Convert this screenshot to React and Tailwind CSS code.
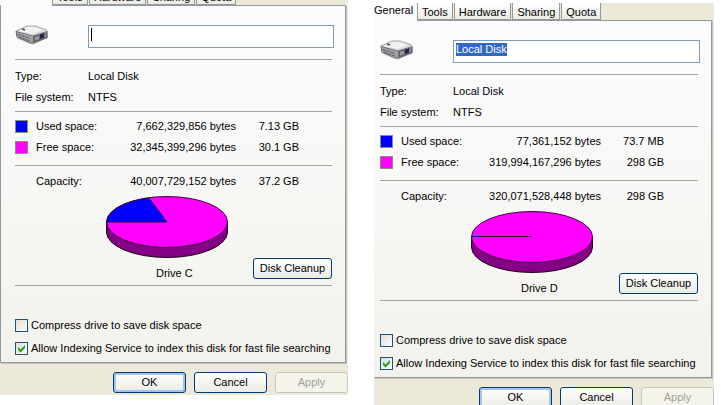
import { useEffect, useRef } from "react";

const drives = [
  {
    id: "c",
    name: "Drive C",
    label: "",
    used: ["7,662,329,856 bytes", "7.13 GB"],
    free: ["32,345,399,296 bytes", "30.1 GB"],
    capacity: ["40,007,729,152 bytes", "37.2 GB"],
    // edge of the used slice on the top face of the pie
    slice: "M61 26 L1 26 A60 25 0 0 1 43 2 Z",
  },
  {
    id: "d",
    name: "Drive D",
    label: "Local Disk",
    used: ["77,361,152 bytes", "73.7 MB"],
    free: ["319,994,167,296 bytes", "298 GB"],
    capacity: ["320,071,528,448 bytes", "298 GB"],
    slice: "M61 25.5 L1 25.5",
  },
];

function DiskIcon() {
  return (
    <svg width="34" height="20" viewBox="0 0 34 20" aria-hidden="true">
      <path d="M2 12 L17 18.5 L33 12 L33 13 L18 20 L2 14 Z" fill="#d9d9dc" />
      <path d="M1 6 L18 10 L18 18 L15 18 L2 12 Z" fill="#a3a3a6" />
      <path d="M18 10 L32 6 L32.5 13 L18 18 Z" fill="#66666f" />
      <path d="M1 6 L12 1 L20 1 L32 5 L32 7 L18 11 Z" fill="#dededf" />
      <path d="M4 6 L13 2 L20 2 L28 5 L17 9 Z" fill="#f2f2f3" />
      <path d="M1 6 L12 1 L20 1 L32 5" fill="none" stroke="#a9a9ac" />
      <path d="M1 6.5 L18 11 L32 6.5" fill="none" stroke="#77777b" />
      <path d="M7 4 L10 5" stroke="#4c4c50" strokeWidth="1.5" />
      <path d="M3 9.5 L15 13.5 M4 12 L15 16" stroke="#56565a" strokeDasharray="3 1" />
      <path d="M1 6 L2 12 L15 18 L19 18 L32 12.5 L32 6" fill="none" stroke="#66666b" />
      <path d="M20 12 L24 11 L24 14 L20 15.5 Z" fill="#9a9aa2" />
      <path d="M25 9.5 L30 8 L30 12 L25 14 Z" fill="#23234f" />
      <path d="M29 8.5 L31 8 L31 11.5 L29 12.5 Z" fill="#8585a8" />
    </svg>
  );
}

function PieChart({ slice }) {
  return (
    <svg width="122" height="62" viewBox="0 0 122 62" aria-hidden="true">
      <path
        d="M0.5 26 V36 A60.5 25.5 0 0 0 121.5 36 V26 Z"
        fill="#840084"
        stroke="#1c001c"
      />
      <ellipse cx="61" cy="26" rx="60.5" ry="25.5" fill="#ff00ff" stroke="#3a003a" />
      <path d={slice} fill="#0000ff" stroke="#2a0048" />
    </svg>
  );
}

function Divider() {
  return <hr className="border-0 border-t border-[#a5a59d]" />;
}

function Tab({ children }) {
  return (
    <button
      type="button"
      role="tab"
      aria-selected="false"
      className="mr-px h-[17px] border-x border-b border-[#919b9c] bg-linear-to-b from-white to-[#ecebe5] px-1 pt-[2px] leading-[14px]"
    >
      {children}
    </button>
  );
}

function Check({ id, checked, children }) {
  return (
    <div className="flex h-[23px] items-center gap-[3px]">
      <span className="relative flex">
        <input
          id={id}
          type="checkbox"
          defaultChecked={checked}
          className="peer size-[13px] appearance-none border border-[#1d5180] bg-linear-to-br from-[#dcdcd7] to-white"
        />
        <svg
          viewBox="0 0 13 13"
          className="pointer-events-none absolute inset-0 hidden size-[13px] peer-checked:block"
          aria-hidden="true"
        >
          <path d="M3 5 L5.5 7.5 L10 3 V6 L5.5 10.5 L3 8 Z" fill="#21a121" />
        </svg>
      </span>
      <label htmlFor={id}>{children}</label>
    </div>
  );
}

function SpaceRow({ color, title, values }) {
  return (
    <tr className="h-[21px]">
      <td className="w-[21px] p-0">
        {color && <div className={`size-[13px] border border-[#8c8c84] ${color}`} />}
      </td>
      <th scope="row" className="w-[75px] p-0 text-left font-normal">
        {title}
      </th>
      <td className="w-[125px] p-0 text-right">{values[0]}</td>
      <td className="w-[63px] p-0 text-right">{values[1]}</td>
    </tr>
  );
}

function DriveProperties({ drive, clipped }) {
  const labelRef = useRef(null);

  useEffect(() => {
    // the volume label starts out selected
    if (drive.label) {
      labelRef.current.focus();
      labelRef.current.select();
    }
  }, [drive.label]);

  return (
    <section
      aria-label={drive.name}
      className={`self-start bg-[#ece9d8] ${clipped ? "mt-[3px]" : "-mt-3"}`}
    >
      <div role="tablist" className="flex h-[17px]">
        <button
          type="button"
          role="tab"
          aria-selected="true"
          aria-label="General"
          className={`h-[17px] bg-[#fcfcfe] pb-[3px] leading-[14px] ${
            clipped ? "w-[43px] text-left" : "w-[52px]"
          }`}
        >
          {clipped && "General"}
        </button>
        <Tab>Tools</Tab>
        <Tab>Hardware</Tab>
        <Tab>Sharing</Tab>
        <Tab>Quota</Tab>
      </div>

      <div
        className={`mr-[2px] border-r border-b border-[#919b9c] bg-linear-to-b from-[#fcfcfe] to-[#f3f2ec] pr-[13px] shadow-[1px_1px_0_#c6c4b8] ${
          clipped ? "pl-[6px]" : "border-l pl-[14px]"
        }`}
      >
        <div className="-mr-[13px] ml-[37px] border-t border-[#919b9c]" />
        <div className="-mr-[2px] flex items-start pt-[19px] pb-[11px]">
          <div className="w-[73px]">
            <DiskIcon />
          </div>
          <div className="relative flex grow">
            <input
              ref={labelRef}
              aria-label="Volume label"
              defaultValue={drive.label}
              className="w-0 grow border border-[#7f9db9] bg-white px-[2px] pt-[2px] pb-[6px] leading-[13px] outline-none selection:bg-[#316ac5] selection:text-white"
            />
            {!drive.label && (
              <span className="absolute top-[3px] left-[3px] h-[13px] w-px bg-black" />
            )}
          </div>
        </div>
        <Divider />

        <dl className="grid grid-cols-[73px_1fr] pt-[6px] pb-[3px] leading-[21px]">
          <dt>Type:</dt>
          <dd>Local Disk</dd>
          <dt>File system:</dt>
          <dd>NTFS</dd>
        </dl>
        <Divider />

        <table className="mt-[4px] mb-[7px] table-fixed border-collapse">
          <tbody>
            <SpaceRow color="bg-[#0000ff]" title="Used space:" values={drive.used} />
            <SpaceRow color="bg-[#ff00ff]" title="Free space:" values={drive.free} />
          </tbody>
        </table>
        <Divider />
        <table className="mt-[5px] table-fixed border-collapse">
          <tbody>
            <SpaceRow title="Capacity:" values={drive.capacity} />
          </tbody>
        </table>

        <div className="flex items-end justify-between pt-[4px] pb-[6px]">
          <figure className="pl-[91px]">
            <PieChart slice={drive.slice} />
            <figcaption className="pt-[9px] pl-[50px] leading-[12px]">{drive.name}</figcaption>
          </figure>
          <button
            type="button"
            className="h-[21px] w-[79px] rounded-[3px] border border-[#003c74] bg-linear-to-b from-white to-[#ecebe5] leading-[13px]"
          >
            Disk Cleanup
          </button>
        </div>
        <Divider />

        <div className="pt-[28px] pb-[2px]">
          <Check id={`compress-${drive.id}`}>Compress drive to save disk space</Check>
          <Check id={`index-${drive.id}`} checked>
            Allow Indexing Service to index this disk for fast file searching
          </Check>
        </div>
      </div>

      <div className="flex justify-end gap-2 pt-[9px] pb-[2px]">
        <button
          type="button"
          className="h-[21px] w-[73px] rounded-[3px] border border-[#003c74] bg-linear-to-b from-white to-[#ecebe5] inset-ring-2 inset-ring-[#a6c3ee]"
        >
          OK
        </button>
        <button
          type="button"
          className="h-[21px] w-[73px] rounded-[3px] border border-[#003c74] bg-linear-to-b from-white to-[#ecebe5]"
        >
          Cancel
        </button>
        <button
          type="button"
          disabled
          className="h-[21px] w-[73px] rounded-[3px] border border-[#c9c7ba] bg-[#f5f4ea] text-[#a1a192]"
        >
          Apply
        </button>
      </div>
    </section>
  );
}

export default function App() {
  return (
    <main className="grid h-screen grid-cols-[348fr_340fr] gap-[26px] overflow-hidden bg-white pr-[7px] font-['Liberation_Sans',Arial,sans-serif] text-[11px] whitespace-nowrap text-black">
      <DriveProperties drive={drives[0]} />
      <DriveProperties drive={drives[1]} clipped />
    </main>
  );
}
